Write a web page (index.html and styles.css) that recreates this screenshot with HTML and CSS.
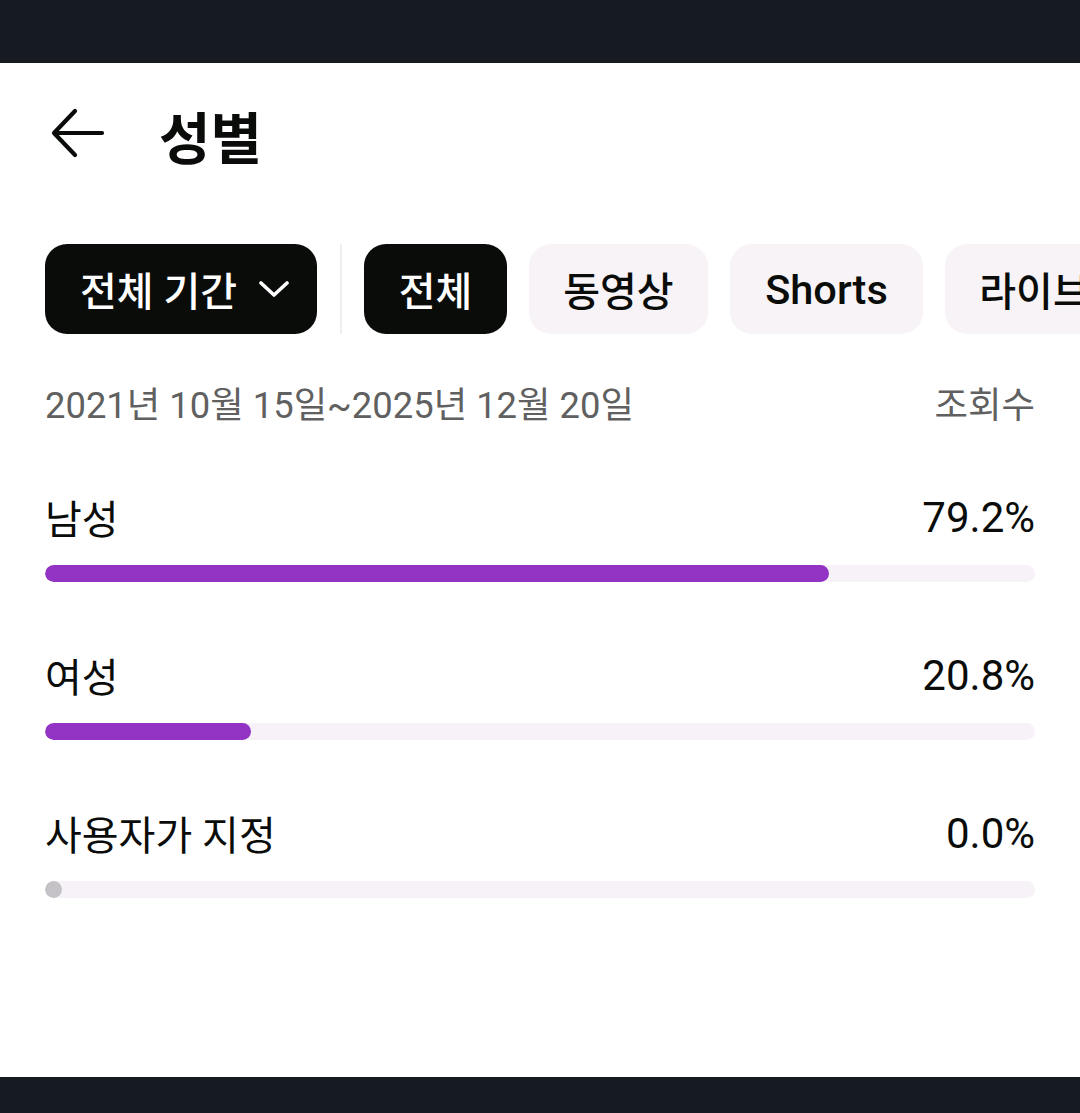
FILE: index.html
```html
<!DOCTYPE html>
<html lang="ko">
<head>
<meta charset="utf-8">
<title>성별</title>
<link rel="stylesheet" href="styles.css">
</head>
<body>
<div class="screen">
  <div class="status-bar"></div>
  <main class="content">
    <header class="header">
      <span class="back">
        <svg width="56" height="50" viewBox="0 0 56 50" fill="none" stroke="#0a0c0a" stroke-width="4.2" stroke-linecap="round" stroke-linejoin="round">
          <path d="M52 25H5"/>
          <path d="M25 3L4 25L25 47"/>
        </svg>
      </span>
      <h1 class="title">성별</h1>
    </header>

    <nav class="chips">
      <button class="chip chip-dark chip-period">전체 기간
        <svg class="chev" width="30" height="16" viewBox="0 0 30 16" fill="none" stroke="#fff" stroke-width="3.6" stroke-linecap="round" stroke-linejoin="round"><path d="M2 2L15 14L28 2"/></svg>
      </button>
      <span class="divider"></span>
      <button class="chip chip-dark">전체</button>
      <button class="chip">동영상</button>
      <button class="chip chip-latin">Shorts</button>
      <button class="chip">라이브</button>
    </nav>

    <div class="meta">
      <span>2021년 10월 15일~2025년 12월 20일</span>
      <span>조회수</span>
    </div>

    <section class="stat">
      <div class="stat-head"><span>남성</span><span class="pct">79.2%</span></div>
      <div class="track"><div class="fill" style="width:79.2%"></div></div>
    </section>
    <section class="stat">
      <div class="stat-head"><span>여성</span><span class="pct">20.8%</span></div>
      <div class="track"><div class="fill" style="width:20.8%"></div></div>
    </section>
    <section class="stat">
      <div class="stat-head"><span>사용자가 지정</span><span class="pct">0.0%</span></div>
      <div class="track"><div class="fill fill-zero"></div></div>
    </section>
  </main>
  <div class="nav-bar"></div>
</div>
</body>
</html>
```

FILE: styles.css
```css
* { box-sizing: border-box; }
html, body {
  margin: 0;
  padding: 0;
  background: #ffffff;
}
body {
  font-family: Roboto, "Noto Sans CJK KR", sans-serif;
  color: #0a0c0a;
}
.screen {
  width: 1080px;
  height: 1113px;
  display: flex;
  flex-direction: column;
  overflow: hidden;
}
.status-bar {
  height: 63px;
  flex: none;
  background: #161b22;
}
.content {
  flex: 1;
  overflow: hidden;
}
.nav-bar {
  height: 36px;
  flex: none;
  background: #161b22;
}
.header {
  height: 140px;
  display: flex;
  align-items: center;
  padding-left: 50px;
}
.back {
  display: flex;
  width: 56px;
  height: 50px;
}
.title {
  margin: 4px 0 0 53px;
  font-size: 56px;
  font-weight: 700;
  line-height: 1;
  font-family: "Noto Sans CJK KR", sans-serif;
}
.chips {
  margin-top: 41px;
  display: flex;
  align-items: stretch;
  gap: 22px;
  padding-left: 45px;
  height: 90px;
  white-space: nowrap;
}
.chip {
  flex: none;
  border: 0;
  margin: 0;
  height: 90px;
  padding: 0 34.5px;
  border-radius: 22px;
  background: #f7f3f7;
  color: #0a0c0a;
  font-family: Roboto, "Noto Sans CJK KR", sans-serif;
  font-size: 40px;
  font-weight: 500;
  display: flex;
  align-items: center;
}
.chip-latin {
  font-size: 41.5px;
  padding: 0 35px;
}
.chip-dark {
  background: #0a0c0a;
  color: #ffffff;
}
.chip-period {
  padding: 0 28px 0 35px;
}
.chev {
  margin-left: 22px;
}
.divider {
  flex: none;
  width: 2px;
  background: #efeef0;
  margin-left: 1px;
}
.meta {
  margin: 43px 45px 0 45px;
  height: 50px;
  display: flex;
  justify-content: space-between;
  align-items: center;
  font-size: 36.4px;
  color: #606060;
}
.stat {
  margin: 62px 45px 0 45px;
}
.stat + .stat {
  margin-top: 65px;
}
.stat-head {
  height: 56px;
  display: flex;
  justify-content: space-between;
  align-items: center;
  font-size: 40px;
}
.pct {
  font-size: 42px;
}
.track {
  margin-top: 20px;
  height: 17px;
  border-radius: 9px;
  background: #f7f2f7;
  overflow: hidden;
}
.fill {
  height: 100%;
  border-radius: 9px;
  background: #9333c3;
}
.fill-zero {
  width: 17px;
  background: #c4c2c6;
}
```
